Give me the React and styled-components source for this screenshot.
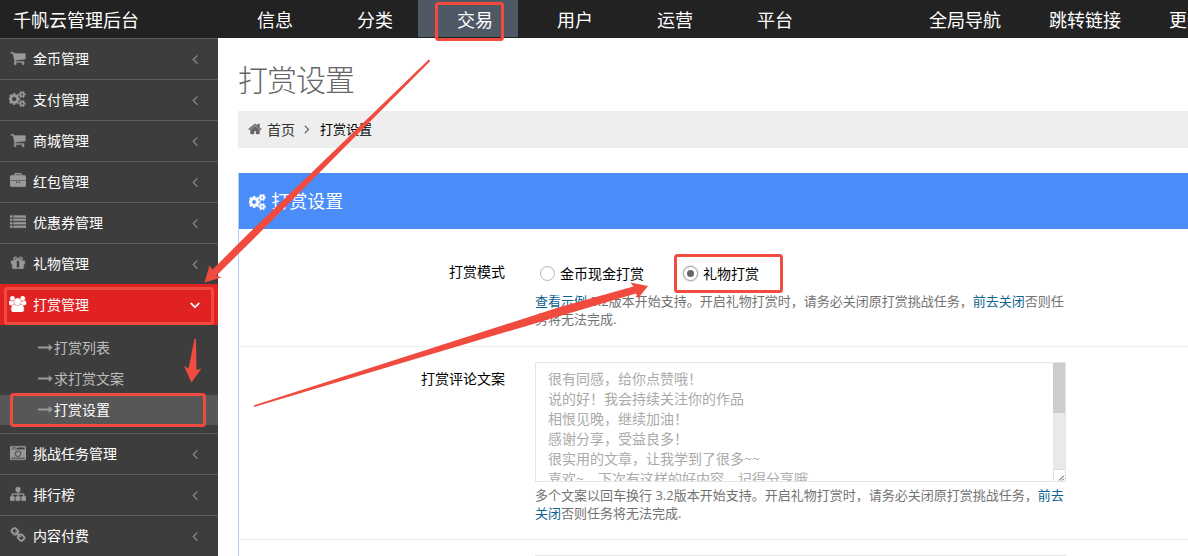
import styled, { createGlobalStyle } from "styled-components";
import { useState } from "react";

const GlobalStyle = createGlobalStyle`
  * {
    box-sizing: border-box;
  }

  body {
    margin: 0;
    overflow: hidden;
    background-color: white;
    font-family: "Open Sans", "Noto Sans CJK SC", sans-serif;
    font-size: 14px;
    color: #000;
  }
`;

const gearBig =
  "M832 896q0-106-75-181t-181-75-181 75-75 181 75 181 181 75 181-75 75-181zM1216 805v185q0 10-7 19.5t-16 10.5l-155 24q-11 35-32 76 34 48 90 115 7 11 7 20 0 12-7 19-23 30-82.5 89.5t-78.5 59.5q-11 0-21-7l-115-90q-37 19-77 31-11 108-23 155-7 24-30 24h-186q-11 0-20-7.5t-10-17.5l-23-153q-34-10-75-31l-118 89q-7 7-20 7-11 0-21-8-144-133-144-160 0-9 7-19 10-14 41-53t47-61q-23-44-35-82l-152-24q-10-1-17-9.5t-7-19.5v-185q0-10 7-19.5t16-10.5l155-24q11-35 32-76-34-48-90-115-7-11-7-20 0-12 7-20 22-30 82-89t79-59q11 0 21 7l115 90q34-18 77-32 11-108 23-154 7-24 30-24h186q11 0 20 7.5t10 17.5l23 153q34 10 75 31l118-89q8-7 20-7 11 0 21 8 144 133 144 160 0 8-7 19-12 16-42 54t-45 60q23 48 34 82l152 23q10 2 17 10.5t7 19.5z";
const gearSmall = (y) =>
  `M1600 ${y + 70}q0-52-38-90t-90-38-90 38-38 90q0 53 37.5 90.5t90.5 37.5 90.5-37.5 37.5-90.5zM1856 ${y}v140q0 16-149 31-12 27-30 52 51 113 51 138 0 4-4 7-122 71-124 71-8 0-46-47t-52-68q-20 2-30 2t-30-2q-14 21-52 68t-46 47q-2 0-124-71-4-3-4-7 0-25 51-138-18-25-30-52-149-15-149-31v-140q0-16 149-31 13-29 30-52-51-113-51-138 0-4 4-7 4-2 35-20t59-34 30-16q8 0 46 46.5t52 67.5q20-2 30-2t30 2q51-71 92-112l6-2q4 0 124 70 4 3 4 7 0 25-51 138 17 23 30 52 149 15 149 31z`;

const icons = {
  cart: {
    d: "M704 1536q0 52-38 90t-90 38-90-38-38-90 38-90 90-38 90 38 38 90zm896 0q0 52-38 90t-90 38-90-38-38-90 38-90 90-38 90 38 38 90zm128-1088v512q0 24-16.5 42.5t-40.5 21.5l-1044 122q13 60 13 70 0 16-24 64h920q26 0 45 19t19 45-19 45-45 19h-1024q-26 0-45-19t-19-45q0-11 8-31.5t16-36 21.5-40 15.5-29.5l-177-823h-204q-26 0-45-19t-19-45 19-45 45-19h256q16 0 28.5 6.5t19.5 15.5 13 24.5 8 26 5.5 29.5 4.5 26h1201q26 0 45 19t19 45z",
  },
  cogs: { w: 1920, d: gearBig + gearSmall(1338) + gearSmall(314) },
  briefcase: {
    d: "M640 256h512v-128h-512v128zm1152 640v480q0 66-47 113t-113 47h-1472q-66 0-113-47t-47-113v-480h672v160q0 26 19 45t45 19h320q26 0 45-19t19-45v-160h672zm-768 0v128h-256v-128h256zm768-480v384h-1792v-384q0-66 47-113t113-47h352v-160q0-40 28-68t68-28h576q40 0 68 28t28 68v160h352q66 0 113 47t47 113z",
  },
  list: {
    d: "M0 1312h256v224h-256zM0 928h256v224h-256zM0 544h256v224h-256zM384 1312h1408v224h-1408zM0 160h256v224h-256zM384 928h1408v224h-1408zM384 544h1408v224h-1408zM384 160h1408v224h-1408z",
  },
  gift: {
    d: "M1056 1356v-716h-320v716q0 25 18 38.5t46 13.5h192q28 0 46-13.5t18-38.5zm-456-844h195l-126-161q-26-31-69-31-40 0-68 28t-28 68 28 68 68 28zm688-96q0-40-28-68t-68-28q-43 0-69 31l-125 161h194q40 0 68-28t28-68zm376 256v320q0 14-9 23t-23 9h-96v416q0 40-28 68t-68 28h-1088q-40 0-68-28t-28-68v-416h-96q-14 0-23-9t-9-23v-320q0-14 9-23t23-9h440q-93 0-158.5-65.5t-65.5-158.5 65.5-158.5 158.5-65.5q107 0 168 77l128 165 128-165q61-77 168-77 93 0 158.5 65.5t65.5 158.5-65.5 158.5-158.5 65.5h440q14 0 23 9t9 23z",
  },
  group: {
    w: 1920,
    d: "M593 896q-162 5-265 128h-134q-82 0-138-40.5t-56-118.5q0-353 124-353 6 0 43.5 21t97.5 42.5 119 21.5q67 0 133-23-5 37-5 66 0 139 81 256zm1071 637q0 120-73 189.5t-194 69.5h-874q-121 0-194-69.5t-73-189.5q0-53 3.5-103.5t14-109 26.5-108.5 43-97.5 62-81 85.5-53.5 111.5-20q10 0 43 21.5t73 48 107 48 135 21.5 135-21.5 107-48 73-48 43-21.5q61 0 111.5 20t85.5 53.5 62 81 43 97.5 26.5 108.5 14 109 3.5 103.5zm-1024-1277q0 106-75 181t-181 75-181-75-75-181 75-181 181-75 181 75 75 181zm704 384q0 159-112.5 271.5t-271.5 112.5-271.5-112.5-112.5-271.5 112.5-271.5 271.5-112.5 271.5 112.5 112.5 271.5zm576 225q0 78-56 118.5t-138 40.5h-134q-103-123-265-128 81-117 81-256 0-29-5-66 66 23 133 23 59 0 119-21.5t97.5-42.5 43.5-21q124 0 124 353zm-128-609q0 106-75 181t-181 75-181-75-75-181 75-181 181-75 181 75 75 181z",
  },
  camera: {
    d: "M928 832q0-14-9-23t-23-9q-66 0-113 47t-47 113q0 14 9 23t23 9 23-9 9-23q0-40 28-68t68-28q14 0 23-9t9-23zm224 130q0 106-75 181t-181 75-181-75-75-181 75-181 181-75 181 75 75 181zm-1024 574h1536v-128h-1536v128zm1152-574q0-159-112.5-271.5t-271.5-112.5-271.5 112.5-112.5 271.5 112.5 271.5 271.5 112.5 271.5-112.5 112.5-271.5zm-1024-642h384v-128h-384v128zm-128 192h1536v-256h-828l-64 128h-644v128zm1664-256v1280q0 53-37.5 90.5t-90.5 37.5h-1536q-53 0-90.5-37.5t-37.5-90.5v-1280q0-53 37.5-90.5t90.5-37.5h1536q53 0 90.5 37.5t37.5 90.5z",
  },
  sitemap: {
    d: "M1792 1248v320q0 40-28 68t-68 28h-320q-40 0-68-28t-28-68v-320q0-40 28-68t68-28h96v-192h-512v192h96q40 0 68 28t28 68v320q0 40-28 68t-68 28h-320q-40 0-68-28t-28-68v-320q0-40 28-68t68-28h96v-192h-512v192h96q40 0 68 28t28 68v320q0 40-28 68t-68 28h-320q-40 0-68-28t-28-68v-320q0-40 28-68t68-28h96v-192q0-52 38-90t90-38h512v-192h-96q-40 0-68-28t-28-68v-320q0-40 28-68t68-28h320q40 0 68 28t28 68v320q0 40-28 68t-68 28h-96v192h512q52 0 90 38t38 90v192h96q40 0 68 28t28 68z",
  },
  link: {
    d: "M1520 1216q0-40-28-68l-208-208q-28-28-68-28-42 0-72 32 3 3 19 18.5t21.5 21.5 15 19 13 25.5 3.5 27.5q0 40-28 68t-68 28q-15 0-27.5-3.5t-25.5-13-19-15-21.5-21.5-18.5-19q-33 31-33 73 0 40 28 68l206 207q27 27 68 27 40 0 68-26l147-146q28-28 28-67zm-703-705q0-40-28-68l-206-207q-28-28-68-28-39 0-68 27l-147 146q-28 28-28 67 0 40 28 68l208 208q27 27 68 27 42 0 72-31-3-3-19-18.5t-21.5-21.5-15-19-13-25.5-3.5-27.5q0-40 28-68t68-28q15 0 27.5 3.5t25.5 13 19 15 21.5 21.5 18.5 19q33-31 33-73zm895 705q0 120-85 203l-147 146q-83 83-203 83-121 0-204-85l-206-207q-83-83-83-203 0-123 88-209l-88-88q-86 88-208 88-120 0-204-84l-208-208q-84-84-84-204t85-203l147-146q83-83 203-83 121 0 204 85l206 207q83 83 83 203 0 123-88 209l88 88q86-88 208-88 120 0 204 84l208 208q84 84 84 204z",
  },
  home: {
    d: "M1472 992v480q0 26-19 45t-45 19h-384v-384h-256v384h-384q-26 0-45-19t-19-45v-480q0-1 .5-3t.5-3l575-474 575 474q1 2 1 6zm223-69l-62 74q-8 9-21 11h-3q-13 0-21-7l-692-577-692 577q-12 8-24 7-13-2-21-11l-62-74q-8-10-7-23.5t11-21.5l719-599q32-26 76-26t76 26l244 204v-195q0-14 9-23t23-9h192q14 0 23 9t9 23v408l219 182q10 8 11 21.5t-7 23.5z",
  },
  angleLeft: {
    d: "M1203 544q0 13-10 23l-393 393 393 393q10 10 10 23t-10 23l-50 50q-10 10-23 10t-23-10l-466-466q-10-10-10-23t10-23l466-466q10-10 23-10t23 10l50 50q10 10 10 23z",
  },
  angleRight: {
    d: "M1171 960q0 13-10 23l-466 466q-10 10-23 10t-23-10l-50-50q-10-10-10-23t10-23l393-393-393-393q-10-10-10-23t10-23l50-50q10-10 23-10t23 10l466 466q10 10 10 23z",
  },
  angleDown: {
    d: "M1395 736q0 13-10 23l-466 466q-10 10-23 10t-23-10l-466-466q-10-10-10-23t10-23l50-50q10-10 23-10t23 10l393 393 393-393q10-10 23-10t23 10l50 50q10 10 10 23z",
  },
  longArrow: {
    d: "M1728 893q0 14-10 24l-384 354q-16 14-35 6-19-9-19-29v-224h-1248q-14 0-23-9t-9-23v-192q0-14 9-23t23-9h1248v-224q0-21 19-29t35 5l384 350q10 10 10 23z",
  },
};

function Icon({ name, size = 16, bold = 0 }) {
  const { w = 1792, d } = icons[name];
  return (
    <svg
      width={(size * w) / 1792}
      height={size}
      viewBox={`0 0 ${w} 1792`}
      fill="currentColor"
      stroke="currentColor"
      strokeWidth={bold}
    >
      <path d={d} />
    </svg>
  );
}

const Page = styled.div`
  position: relative;
  width: 1188px;
  height: 556px;
  overflow: hidden;
`;

const Header = styled.header`
  display: flex;
  height: 38px;
  background-color: #222;
  color: white;
  font-size: 18px;
  line-height: 40px;
  white-space: nowrap;
`;

const Brand = styled.div`
  flex: 0 0 218px;
  padding-left: 13px;
`;

const NavItem = styled.div`
  flex: 0 0 100px;
  height: 37px;
  padding-left: 39px;
  background-color: ${(p) => (p.$active ? "#4f5965" : "transparent")};
`;

const QuickLinks = styled.div`
  display: flex;
  flex: none;
  gap: 48px;
  margin-left: 111px;
`;

const Body = styled.div`
  display: flex;
  height: 518px;
`;

const Sidebar = styled.aside`
  flex: 0 0 218px;
  background-color: #3d3d3d;
`;

const MenuItem = styled.div`
  display: flex;
  align-items: center;
  height: 41px;
  padding: 0 15px 0 4px;
  border-top: 1px solid ${(p) => (p.$active ? "#e02222" : "#5c5c5c")};
  background-color: ${(p) => (p.$active ? "#e02222" : "transparent")};
  color: ${(p) => (p.$active ? "white" : "#999")};

  & p {
    flex: 1;
    margin: 0 0 0 1px;
    line-height: 20px;
    color: white;
  }
`;

const MenuIcon = styled.span`
  display: flex;
  justify-content: center;
  width: 28px;
  margin-top: -2px;
`;

const MenuArrow = styled.span`
  display: flex;
  margin-top: -1px;
  color: ${(p) => (p.$active ? "white" : "#858585")};
`;

const SubMenu = styled.div`
  display: grid;
  gap: 1px;
  padding: 8px 0;
`;

const SubItem = styled.div`
  display: flex;
  align-items: center;
  gap: 1px;
  height: 30px;
  padding: 0 0 2px 38px;
  background-color: ${(p) => (p.$active ? "#575757" : "transparent")};
  color: #999;

  & span {
    color: ${(p) => (p.$active ? "white" : "#bdbdbd")};
  }
`;

const Content = styled.main`
  flex: 1;
  min-width: 0;
  padding-left: 20px;
`;

const Title = styled.h3`
  height: 73px;
  margin: 0;
  padding-top: 22px;
  color: #666;
  font-size: 30px;
  font-weight: 300;
  letter-spacing: -1px;
  line-height: 40px;
`;

const Breadcrumb = styled.div`
  display: flex;
  align-items: center;
  height: 37px;
  padding: 0 0 2px 10px;
  background-color: #eee;
  color: #666;

  & a {
    margin: 0 5px;
    color: #333;
  }

  & b {
    margin-left: 6px;
    color: #000;
    font-size: 13px;
    font-weight: normal;
  }
`;

const Portlet = styled.section`
  height: 400px;
  margin-top: 25px;
  border-left: 1px solid #b4cef8;
`;

const PortletTitle = styled.div`
  display: flex;
  align-items: center;
  gap: 5px;
  height: 56px;
  padding: 0 0 2px 10px;
  background-color: #4b8df8;
  color: white;
  font-size: 18px;

  & svg {
    margin-top: 4px;
  }
`;

const FormRow = styled.div`
  display: flex;
  height: ${(p) => p.$height}px;
  margin-left: 1px;
  padding-top: 15px;
  border-bottom: 1px solid #eee;
`;

const Label = styled.label`
  width: 265px;
  margin-right: 30px;
  padding-top: ${(p) => p.$top}px;
  line-height: 20px;
  text-align: right;
`;

const Controls = styled.div`
  width: 531px;
`;

const RadioGroup = styled.div`
  display: flex;
  align-items: center;
  height: 30px;
  margin-top: 14px;
  padding-left: 5px;
`;

const RadioLabel = styled.label`
  display: flex;
  align-items: center;
  gap: 5px;
  margin-right: 39px;
  cursor: pointer;
`;

const Radio = styled.span`
  display: flex;
  align-items: center;
  justify-content: center;
  width: 15px;
  height: 15px;
  border: 1px solid ${(p) => (p.$checked ? "#aaa" : "#b5b5b5")};
  border-radius: 50%;
  background-color: white;
  box-shadow: ${(p) => (p.$checked ? "0 0 2px #aaa" : "none")};

  &::after {
    content: "";
    width: 7px;
    height: 7px;
    border-radius: 50%;
    background-color: ${(p) => (p.$checked ? "#666" : "transparent")};
  }
`;

const Help = styled.p`
  margin: ${(p) => p.$top}px 0 0;
  color: #737373;
  font-size: 13px;
  line-height: 18px;
  white-space: nowrap;

  & a {
    color: #0d638f;
  }
`;

const TextBox = styled.div`
  display: flex;
  height: 120px;
  border: 1px solid #e5e5e5;
  overflow: hidden;
`;

const Lines = styled.div`
  flex: 1;
  height: 118px;
  padding: 6px 12px;
  overflow: hidden;
  color: #aaa;
  line-height: 20px;
  white-space: pre;
`;

const ScrollTrack = styled.div`
  display: flex;
  flex-direction: column;
  justify-content: space-between;
  width: 12px;
  background-color: #e9e9e9;
`;

const ScrollThumb = styled.div`
  height: 50px;
  background-color: #cdcdcd;
`;

const Resizer = styled.div`
  height: 12px;
  border: solid #dcdcdc;
  border-width: 1px 0 0 1px;
  background-color: white;

  & svg {
    display: block;
  }
`;

const Marks = styled.svg`
  position: absolute;
  top: 0;
  left: 0;
  pointer-events: none;
`;

const navs = ["信息", "分类", "交易", "用户", "运营", "平台"];
const links = ["全局导航", "跳转链接", "更新日志"];

const menus = [
  { icon: "cart", name: "金币管理" },
  { icon: "cogs", name: "支付管理" },
  { icon: "cart", name: "商城管理" },
  { icon: "briefcase", name: "红包管理" },
  { icon: "list", name: "优惠券管理" },
  { icon: "gift", name: "礼物管理" },
  { icon: "group", name: "打赏管理", children: ["打赏列表", "求打赏文案", "打赏设置"] },
  { icon: "camera", name: "挑战任务管理" },
  { icon: "sitemap", name: "排行榜" },
  { icon: "link", name: "内容付费" },
];

const comments = `很有同感，给你点赞哦！
说的好！我会持续关注你的作品
相恨见晚，继续加油！
感谢分享，受益良多！
很实用的文章，让我学到了很多~~
喜欢~，下次有这样的好内容，记得分享哦`;

function Menu({ item }) {
  const active = item.children != null;

  return (
    <>
      <MenuItem $active={active}>
        <MenuIcon>
          <Icon name={item.icon} bold={40} />
        </MenuIcon>
        <p>{item.name}</p>
        <MenuArrow $active={active}>
          <Icon name={active ? "angleDown" : "angleLeft"} bold={active ? 80 : 20} />
        </MenuArrow>
      </MenuItem>
      {active && (
        <SubMenu>
          {item.children.map((child) => (
            <SubItem key={child} $active={child == "打赏设置"}>
              <Icon name="longArrow" size={15} />
              <span>{child}</span>
            </SubItem>
          ))}
        </SubMenu>
      )}
    </>
  );
}

export default function App() {
  const [mode, setMode] = useState("gift");

  return (
    <Page>
      <GlobalStyle />
      <Header>
        <Brand>千帆云管理后台</Brand>
        {navs.map((nav) => (
          <NavItem key={nav} $active={nav == "交易"}>
            {nav}
          </NavItem>
        ))}
        <QuickLinks>
          {links.map((link) => (
            <span key={link}>{link}</span>
          ))}
        </QuickLinks>
      </Header>
      <Body>
        <Sidebar>
          {menus.map((item) => (
            <Menu key={item.name} item={item} />
          ))}
        </Sidebar>
        <Content>
          <Title>打赏设置</Title>
          <Breadcrumb>
            <Icon name="home" size={14} bold={50} />
            <a>首页</a>
            <Icon name="angleRight" size={14} bold={30} />
            <b>打赏设置</b>
          </Breadcrumb>
          <Portlet>
            <PortletTitle>
              <Icon name="cogs" bold={60} />
              打赏设置
            </PortletTitle>
            <FormRow $height={118}>
              <Label $top={18}>打赏模式</Label>
              <Controls>
                <RadioGroup>
                  <RadioLabel onClick={() => setMode("coin")}>
                    <Radio $checked={mode == "coin"} />
                    金币现金打赏
                  </RadioLabel>
                  <RadioLabel onClick={() => setMode("gift")}>
                    <Radio $checked={mode == "gift"} />
                    礼物打赏
                  </RadioLabel>
                </RadioGroup>
                <Help $top={4}>
                  <a>查看示例</a> 3.2版本开始支持。开启礼物打赏时，请务必关闭原打赏挑战任务，<a>前去关闭</a>否则任
                  <br />
                  务将无法完成.
                </Help>
              </Controls>
            </FormRow>
            <FormRow $height={193}>
              <Label $top={7}>打赏评论文案</Label>
              <Controls>
                <TextBox>
                  <Lines>{comments}</Lines>
                  <ScrollTrack>
                    <ScrollThumb />
                    <Resizer>
                      <svg width="11" height="11" stroke="#444">
                        <path d="M5 10.5l5-5M8 10.5l2-2" />
                      </svg>
                    </Resizer>
                  </ScrollTrack>
                </TextBox>
                <Help $top={4}>
                  多个文案以回车换行 3.2版本开始支持。开启礼物打赏时，请务必关闭原打赏挑战任务，<a>前去</a>
                  <br />
                  <a>关闭</a>否则任务将无法完成.
                </Help>
              </Controls>
            </FormRow>
            <FormRow $height={193}>
              <Label $top={7} />
              <Controls>
                <TextBox />
              </Controls>
            </FormRow>
          </Portlet>
        </Content>
      </Body>
      {/* red guide boxes and arrows over the page */}
      <Marks width="1188" height="556">
        <g fill="none" stroke="#f04b3e" strokeWidth="3">
          <rect x="436.5" y="3.5" width="66" height="36" rx="2" />
          <rect x="5.5" y="288.5" width="207" height="35" rx="2" />
          <rect x="11.5" y="394.5" width="193" height="31" rx="2" />
          <rect x="675.5" y="255.5" width="106" height="36" rx="2" />
        </g>
        <g fill="#f04b3e">
          <path d="M428.8 59.5L430.3 61L256.5 236L216.5 275.5L221.5 277.5L204.5 282.5L209.5 265.5L212.5 269.5L247 235Z" />
          <path d="M254 405.3L560 307L633.5 286.5L630.5 282.5L648 286L638 298.5L636 293.5L560 316L254 407Z" />
          <path d="M194.5 339H196L196.5 370L201.5 368.5L191.5 382.5L184 366L188.5 368.5Z" />
        </g>
      </Marks>
    </Page>
  );
}
